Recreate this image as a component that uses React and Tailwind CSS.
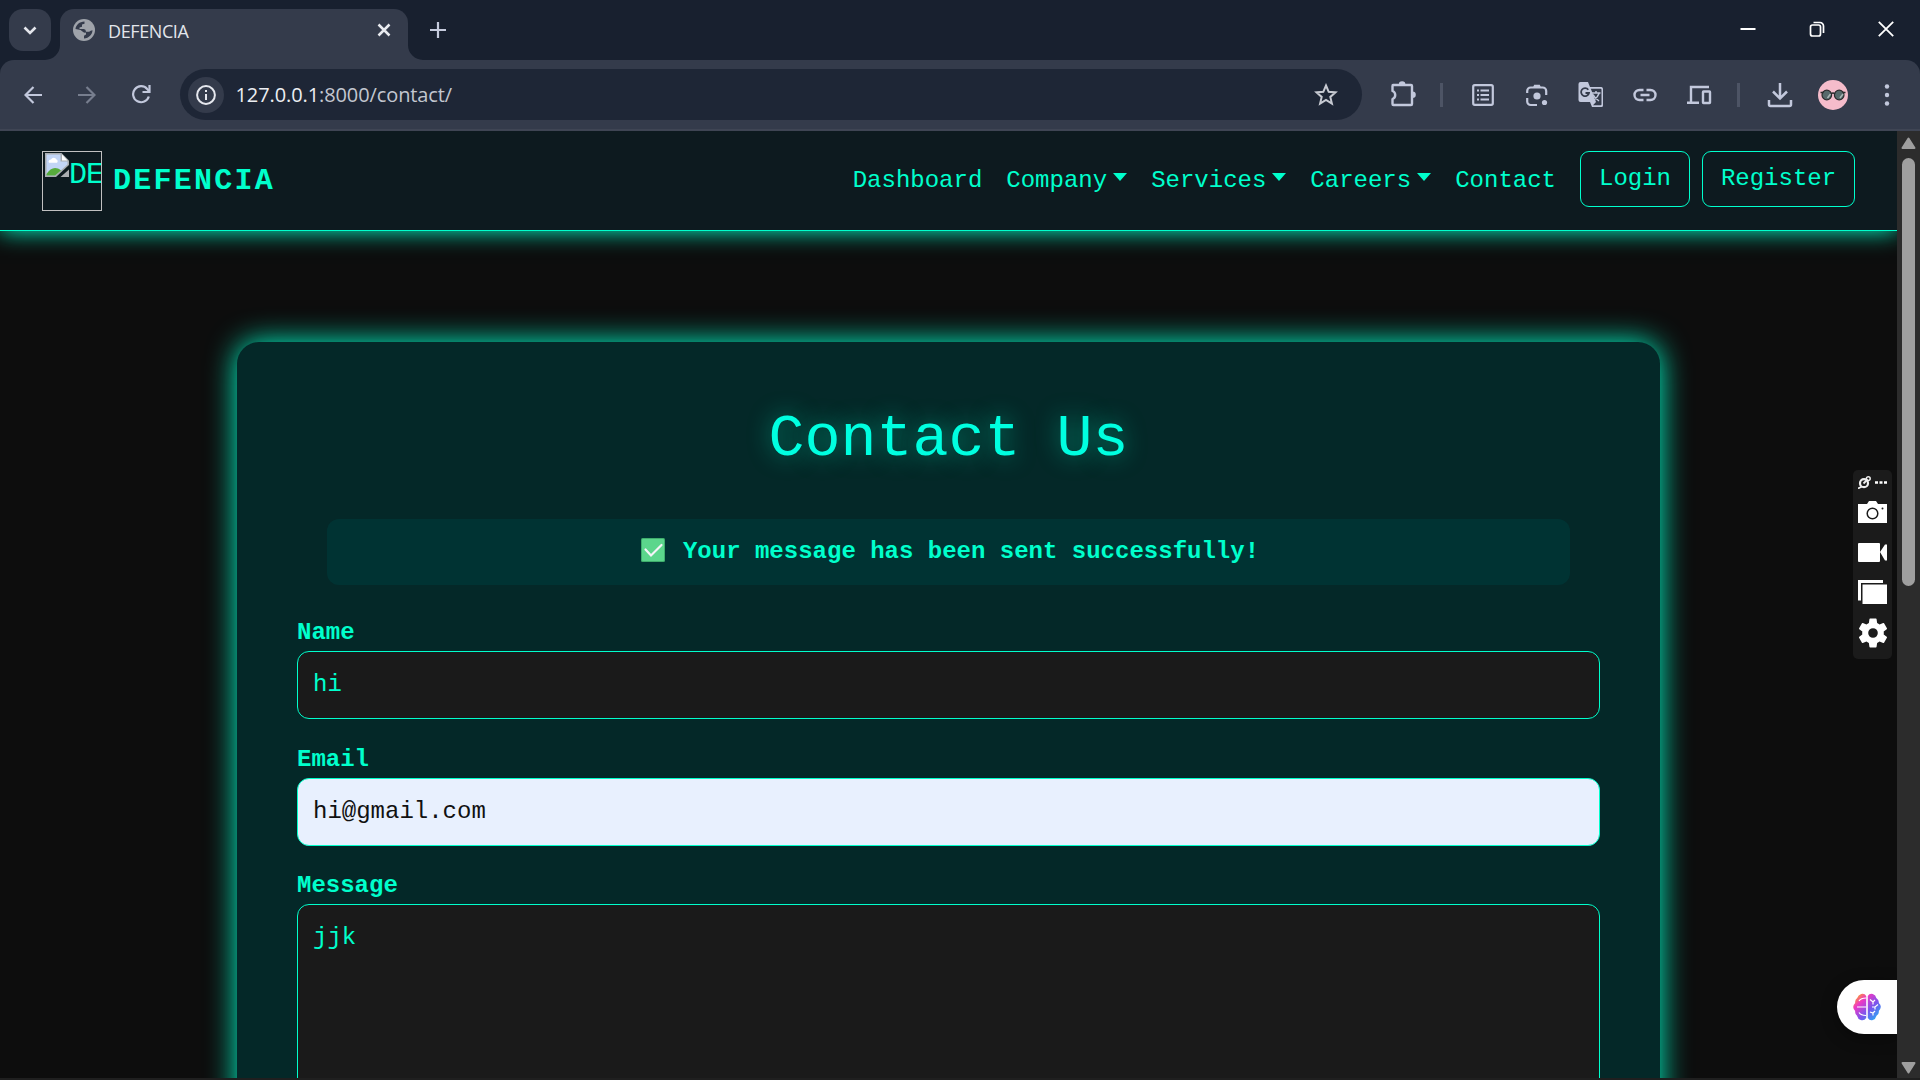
import React from "react";

const MONO = "font-['Courier_New','Liberation_Mono',monospace]";

function Icon({ className = "", children, box = "0 0 24 24", ...rest }) {
  return (
    <svg viewBox={box} className={`shrink-0 ${className}`} fill="none" {...rest}>
      {children}
    </svg>
  );
}

function TabStrip() {
  return (
    <div className="flex h-[60px] bg-[#18202f]">
      <div className="flex h-[60px] w-[60px] shrink-0 items-start rounded-br-[18px] pl-[9px] pt-[9px]">
        <div className="flex h-[42px] w-[42px] items-center justify-center rounded-[14px] bg-[#343b4b]">
          <Icon className="h-[42px] w-[42px]" box="0 0 42 42">
            <path d="M15.5 18.5l5.5 5.5 5.5-5.5" stroke="#e4e6ec" strokeWidth="2.6" />
          </Icon>
        </div>
      </div>
      <div className="relative mt-[9px] flex h-[51px] w-[348px] items-center rounded-t-[14px] bg-[#343b4b]">
        <svg viewBox="0 0 15 15" className="absolute -left-[15px] bottom-0 h-[15px] w-[15px]">
          <path d="M15 0v15H0A15 15 0 0 0 15 0z" fill="#343b4b" />
        </svg>
        <svg viewBox="0 0 15 15" className="absolute -right-[15px] bottom-0 h-[15px] w-[15px]">
          <path d="M0 0v15h15A15 15 0 0 1 0 0z" fill="#343b4b" />
        </svg>
        <Icon className="mb-[9px] ml-[13px] h-[22px] w-[22px]" box="0 0 22 22">
          <circle cx="11" cy="11" r="11" fill="#9fa3aa" />
          <path d="M2.500 10C2.800 6 6.500 2.600 11.500 2.500v2.200L9 5.500v2.300L6.500 8.500v1.500h4.300q2.200.3 2.200 2.800h3.200q1.300-1.500 3.300-1.500c0 4-3.500 8-8.500 8.200v-2.800l2-1.200v-2q-2.500.6-3.500-1L7.500 11z" fill="#343b4b" />
        </Icon>
        <span className="mb-[7px] ml-[13px] w-[250px] font-['Open_Sans','Noto_Sans',sans-serif] text-[18px] leading-none tracking-[-0.4px] text-[#e3e6ec]">
          DEFENCIA
        </span>
        <Icon className="mb-[9px] ml-[19px] h-[14px] w-[14px]" box="0 0 14 14">
          <path d="M1.5 1.5l11 11M12.500 1.500l-11 11" stroke="#e9ebf0" strokeWidth="2.5" />
        </Icon>
      </div>
      <Icon className="ml-[22px] mt-[22px] h-4 w-4" box="0 0 16 16">
        <path d="M8 0v16M0 8h16" stroke="#c5cbdd" strokeWidth="2.2" />
      </Icon>
      <div className="ml-auto mr-[26px] mt-[20px] flex h-[18px] w-[154px] items-center justify-between">
        <Icon className="h-4 w-4" box="0 0 16 16">
          <path d="M0.500 8h15" stroke="#fff" strokeWidth="2" />
        </Icon>
        <Icon className="h-4 w-4" box="0 0 16 16">
          <rect x="1.500" y="4" width="10" height="11" rx="2" stroke="#fff" strokeWidth="1.7" />
          <path d="M4.500 1.500h6.500a3.500 3.500 0 0 1 3.500 3.500v7" stroke="#fff" strokeWidth="1.700" />
        </Icon>
        <Icon className="h-4 w-4" box="0 0 16 16">
          <path d="M.8.8l14.400 14.400M15.200.8L.8 15.200" stroke="#fff" strokeWidth="1.800" />
        </Icon>
      </div>
    </div>
  );
}

function Toolbar() {
  return (
    <div className="bg-[#18202f]">
      <div className="flex h-[71px] items-center rounded-t-[14px] border-b-2 border-[#3f4554] bg-[#343b4b] pl-[24px] text-[#c2c8dc]">
        <Icon className="h-[18px] w-[18px]" box="0 0 18 18">
          <path d="M18 9H1.500M9.500 1L1.500 9l8 8" stroke="currentColor" strokeWidth="2.200" />
        </Icon>
        <Icon className="ml-[36px] h-[18px] w-[18px]" box="0 0 18 18">
          <path d="M0 9h16.500M8.500 1l8 8-8 8" stroke="#777e8e" strokeWidth="2.200" />
        </Icon>
        <Icon className="ml-[36px] h-[19px] w-[19px]" box="0 0 19 19">
          <path d="M16.800 11.500A8 8 0 1 1 15.200 4L17 6" stroke="currentColor" strokeWidth="2.200" />
          <path d="M17.500 0v7H10.500" stroke="currentColor" strokeWidth="2.200" />
        </Icon>
        <div className="ml-[29px] flex h-[51px] w-[1182px] items-center rounded-full bg-[#1e2636] pl-[8px] pr-[24px]">
          <div className="flex h-9 w-9 shrink-0 items-center justify-center rounded-full bg-[#343b4b]">
            <Icon className="h-[20px] w-[20px]" box="0 0 20 20">
              <circle cx="10" cy="10" r="8.900" stroke="#e6e8ee" strokeWidth="2" />
              <path d="M10 9v6M10 5v2" stroke="#e6e8ee" strokeWidth="2" />
            </Icon>
          </div>
          <span className="ml-[11.500px] whitespace-nowrap font-['Open_Sans','Noto_Sans',sans-serif] text-[20px] leading-none tracking-[-0.100px] text-[#c3c7d0]">
            <span className="text-[#eceef2]">127.0.0.1</span>:8000/contact/
          </span>
          <Icon className="ml-auto h-[24px] w-[24px]">
            <path
              d="M12 2.500l2.700 6.300 6.800.6-5.200 4.500 1.600 6.700-5.900-3.600-5.900 3.600 1.600-6.700L2.500 9.400l6.800-.6z"
              stroke="#c7cad2"
              strokeWidth="2"
            />
          </Icon>
        </div>
        <Icon className="mb-[2px] ml-[28px] h-[30px] w-[26px]" box="0 0 26 30">
          <path
            d="M3 6h18q1 0 1 1v18q0 1-1 1H3.500q-1 0-1-1v-5a4.300 4.300 0 0 0 0-8V7q0-1 .5-1z"
            stroke="currentColor"
            strokeWidth="2.400"
            strokeLinejoin="round"
          />
          <path d="M8.800 5.500a3.300 3.300 0 0 1 6.600 0zM22.500 12.500a3.300 3.300 0 0 1 0 6.600z" fill="currentColor" />
        </Icon>
        <div className="ml-[24px] h-[24px] w-[3px] bg-[#4d5465]" />
        <Icon className="ml-[29px] h-[22px] w-[22px]" box="0 0 22 22">
          <rect x="1.200" y="1.200" width="19.600" height="19.600" rx="1.500" stroke="currentColor" strokeWidth="2.200" />
          <path d="M8.500 6.500H17M8.500 11H17M8.500 15.500H17" stroke="currentColor" strokeWidth="2" />
          <path d="M5 6.500h2M5 11h2M5 15.500h2" stroke="currentColor" strokeWidth="2" />
        </Icon>
        <Icon className="ml-[31px] h-[24px] w-[24px]">
          <path
            d="M2.200 10V8a3.500 3.500 0 0 1 3.500-3.500h12A3.500 3.500 0 0 1 21.200 8v4M2.200 15v3.500A3.500 3.500 0 0 0 5.700 22H12"
            stroke="currentColor"
            strokeWidth="2.200"
          />
          <path d="M8 4.500L9.200 1.800h5.600L16 4.500z" fill="currentColor" />
          <circle cx="12" cy="13" r="3.600" fill="currentColor" />
          <circle cx="19.500" cy="19.500" r="2.600" fill="currentColor" />
        </Icon>
        <Icon className="ml-[29px] h-[26px] w-[26px]" box="0 0 26 26">
          <path d="M2.500 0H10l2 5h11.500A1.800 1.800 0 0 1 25 7v16.500a1.500 1.500 0 0 1-1.500 1.500H14l-2-5H2.500A2 2 0 0 1 .5 18V2a2 2 0 0 1 2-2z" fill="currentColor" />
          <path d="M12.800 6.700h9.700q1 0 1 1v14.600q0 1-1 1H15l3-3.300z" fill="#343b4b" />
          <path d="M10.300 7.700A4 4 0 1 0 11 11H7.500" stroke="#343b4b" strokeWidth="1.800" />
          <path d="M13.500 11h9M18 9v2M21 11.500c-1 3-3 5-5 6.500M15 12.500c1 2.500 3 4.500 6 6.500" stroke="currentColor" strokeWidth="1.500" />
        </Icon>
        <Icon className="ml-[28px] h-[24px] w-[26px]" box="0 0 26 24">
          <path d="M11.500 7H7.500a5 5 0 0 0 0 10h4M14.500 7h4a5 5 0 0 1 0 10h-4M8.500 12h9" stroke="currentColor" strokeWidth="2.400" />
        </Icon>
        <Icon className="ml-[28px] h-[24px] w-[26px]" box="0 0 26 24">
          <path d="M23 4H5v15M1 19.800h12" stroke="currentColor" strokeWidth="2.400" />
          <rect x="17" y="8.500" width="7" height="11.500" rx=".5" stroke="currentColor" strokeWidth="2.400" />
        </Icon>
        <div className="ml-[25px] h-[24px] w-[3px] bg-[#4d5465]" />
        <Icon className="ml-[27px] h-[26px] w-[26px]" box="0 0 26 26">
          <path d="M13 1v15M6 9.500l7 7 7-7M2 18v4.500Q2 24 3.500 24h19Q24 24 24 22.500V18" stroke="currentColor" strokeWidth="2.500" />
        </Icon>
        <Icon className="ml-[25px] h-[30px] w-[30px]" box="0 0 30 30">
          <circle cx="15" cy="15" r="15" fill="#f5bccb" />
          <circle cx="8.800" cy="15" r="4.800" fill="#56696b" stroke="#2b2b2d" strokeWidth="1.200" />
          <circle cx="21.200" cy="15" r="4.800" fill="#56696b" stroke="#2b2b2d" strokeWidth="1.200" />
          <path d="M13 14q2-2 4 0M2.500 12.500h3M24.500 12.500h3" stroke="#2b2b2d" strokeWidth="1.500" />
          <path d="M9.500 18l3-4M22 18l3-4" stroke="#a8b5b5" strokeWidth="1.500" />
        </Icon>
        <Icon className="ml-[36px] h-[24px] w-[6px]" box="0 0 6 24">
          <circle cx="3" cy="3.500" r="2.200" fill="currentColor" />
          <circle cx="3" cy="12" r="2.200" fill="currentColor" />
          <circle cx="3" cy="20.500" r="2.200" fill="currentColor" />
        </Icon>
      </div>
    </div>
  );
}

function Caret() {
  return <span className="mb-[9px] ml-[6px] h-0 w-0 border-x-[7px] border-t-[8px] border-x-transparent border-t-[#00ffcc]" />;
}

function NavLink({ label, caret }) {
  return (
    <a className="flex items-center">
      <span>{label}</span>
      {caret && <Caret />}
    </a>
  );
}

function SiteNav() {
  return (
    <nav className="relative flex h-[100px] shrink-0 items-start border-b border-[#00ffcc] bg-[#0d1a1f] pl-[42px] pr-[42px] text-[24px] leading-[36px] text-[#00ffcc] shadow-[0_0_22px_#00ffcc]">
      <div className="mt-5 flex h-[60px] w-[60px] shrink-0 items-start overflow-hidden border border-[#c0c0c0] pl-[2px] pt-[1px]">
        <svg viewBox="0 0 24 24" className="h-6 w-6 shrink-0">
          <path d="M0 0h16.500L24 7.500V12L11 24H0z" fill="#a9adb0" />
          <path d="M1.500 1.500h14v7h7V11.500L10 22.500H1.500z" fill="#c2d5f6" />
          <path d="M3.500 8.500a2.500 2.500 0 0 1 2.500-2 3 3 0 0 1 5.500 0 2 2 0 0 1 .500 3.300H4z" fill="#fff" />
          <path d="M1.500 21c4-6 9-8 14.500-3.500L10 22.500H1.500z" fill="#56ab3c" />
          <path d="M17 1.500V7.500H22.500z" fill="#fff" />
          <path d="M24 16.500V24h-8.500z" fill="#a9adb0" />
        </svg>
        <span className="mt-[4px] whitespace-nowrap text-[30px] tracking-[-1px]">DE</span>
      </div>
      <span className="ml-[11px] mt-[32px] text-[30px] font-bold tracking-[2.250px]">DEFENCIA</span>
      <div className="ml-auto mt-[32px] flex gap-[24px]">
        <NavLink label="Dashboard" />
        <NavLink label="Company" caret />
        <NavLink label="Services" caret />
        <NavLink label="Careers" caret />
        <NavLink label="Contact" />
      </div>
      <div className="ml-[24px] mt-5 flex gap-3">
        <a className="flex h-[56px] w-[110px] items-center justify-center rounded-[9px] border border-[#00ffcc]">Login</a>
        <a className="flex h-[56px] w-[153px] items-center justify-center rounded-[9px] border border-[#00ffcc]">Register</a>
      </div>
    </nav>
  );
}

function ContactCard() {
  return (
    <section className="mx-auto mt-[111px] h-[1100px] w-[1423px] shrink-0 rounded-[22px] bg-[#042828] px-[60px] pt-[60px] text-[24px] text-[#00ffcc] shadow-[0_0_30px_#00ffcc]">
      <h1 className="text-center text-[60px] leading-[74px] text-[#00ffe0] [text-shadow:0_0_22px_#00ffcc80]">Contact Us</h1>
      <div className="mx-[30px] mt-[43px] flex h-[66px] items-center justify-center rounded-[12px] bg-[#003333] pl-[3px] font-bold">
        <svg viewBox="0 0 24 24" className="mb-[5px] mr-[18px] h-6 w-6">
          <rect width="24" height="24" rx="1.500" fill="#3fae6d" />
          <rect x="1" y="1" width="22" height="22" rx="1" fill="#5bd68c" />
          <path d="M4.500 11.500l5.500 6L20.500 7" fill="none" stroke="#f4f4f8" strokeWidth="2.200" strokeLinecap="round" />
        </svg>
        <span>Your message has been sent successfully!</span>
      </div>
      <div className="mt-[30px] leading-[36px]">
        <Field label="Name">
          <div className="h-[68px] rounded-[12px] border border-[#00ffcc] bg-[#1a1a1a] px-[15px] pt-[15px]">hi</div>
        </Field>
        <Field label="Email">
          <div className="h-[68px] rounded-[12px] border border-[#00ffcc] bg-[#e8f0fe] px-[15px] pt-[15px] text-[#111]">hi@gmail.com</div>
        </Field>
        <Field label="Message">
          <div className="h-[300px] rounded-[12px] border border-[#00ffcc] bg-[#1a1a1a] px-[15px] pt-[15px]">jjk</div>
        </Field>
      </div>
    </section>
  );
}

function Field({ label, children }) {
  return (
    <div className="mb-[22.500px]">
      <div className="h-[36px] font-bold">{label}</div>
      {children}
    </div>
  );
}

function CaptureDock() {
  return (
    <div className="absolute right-[5px] top-[339px] flex h-[189px] w-[39px] flex-col items-center rounded-[5px] bg-[#1b1b1b]">
      <div className="mt-[6px] flex h-[13px] w-[29px] items-center justify-between">
        <Icon className="h-[13px] w-[13px]" box="0 0 13 13">
          <circle cx="6" cy="7.200" r="4" stroke="#eee" strokeWidth="2.200" />
          <path d="M5.500 7.500l4-4M0 12.500l4-2" stroke="#eee" strokeWidth="1.800" />
          <circle cx="10.300" cy="2.700" r="1.900" stroke="#eee" strokeWidth="1.500" />
        </Icon>
        <Icon className="h-[3px] w-[12px]" box="0 0 12 3">
          <path d="M0 1.500h3M4.500 1.500h3M9 1.500h3" stroke="#fff" strokeWidth="2.600" />
        </Icon>
      </div>
      <Icon className="mt-[12px] h-[22px] w-[29px]" box="0 0 29 22">
        <path d="M0 3h9l2-3h7l2 3h9v19H0z" fill="#fff" />
        <circle cx="14.500" cy="12.500" r="5.300" stroke="#1b1b1b" strokeWidth="1.500" />
        <circle cx="24.500" cy="7.500" r="1" fill="#1b1b1b" />
      </Icon>
      <Icon className="mt-[20px] h-[19px] w-[29px]" box="0 0 29 19">
        <path d="M1 0h20q1 0 1 1v17q0 1-1 1H1q-1 0-1-1V1q0-1 1-1zM22 9l5-7.500h2v16h-2z" fill="#fff" />
      </Icon>
      <Icon className="mt-[18px] h-[24px] w-[29px]" box="0 0 29 24">
        <path d="M0 0h25v3H3v17.500H0zM4.500 4.500H29V24H4.500z" fill="#fff" />
      </Icon>
      <Icon className="mt-[11px] h-[36px] w-[36px]">
        <path
          fill="#fff"
          d="M19.140 12.940c.04-.3.060-.61.060-.94 0-.32-.02-.64-.07-.94l2.030-1.580a.49.49 0 0 0 .12-.61l-1.920-3.320a.49.49 0 0 0-.59-.22l-2.390.96c-.5-.38-1.030-.7-1.620-.94l-.36-2.540a.48.48 0 0 0-.48-.41h-3.840a.47.47 0 0 0-.47.410l-.36 2.540c-.59.240-1.130.570-1.620.940l-2.390-.96a.47.47 0 0 0-.59.220L2.740 8.870a.48.48 0 0 0 .12.610l2.030 1.580c-.05.300-.09.630-.09.940s.02.640.07.940l-2.030 1.580a.49.49 0 0 0-.12.610l1.920 3.320c.12.220.370.290.590.220l2.390-.96c.5.380 1.030.700 1.620.940l.36 2.540c.050.240.240.410.480.410h3.840c.24 0 .44-.17.470-.41l.36-2.540c.59-.24 1.130-.56 1.620-.94l2.390.960c.22.080.470 0 .590-.22l1.920-3.320a.47.47 0 0 0-.12-.61zM12 15.200a3.200 3.200 0 1 1 0-6.400 3.200 3.200 0 0 1 0 6.400z"
        />
      </Icon>
    </div>
  );
}

function AssistantTab() {
  return (
    <div className="absolute bottom-[44px] right-0 flex h-[54px] w-[60px] items-center rounded-l-full bg-white pl-[16px] shadow-[0_4px_16px_rgba(0,0,0,0.4)]">
      <Icon className="h-[28px] w-[28px]" box="0 0 28 28">
        <defs>
          <linearGradient id="brain" x1="3" y1="2" x2="26" y2="26" gradientUnits="userSpaceOnUse">
            <stop offset="0" stopColor="#ffa51f" />
            <stop offset=".25" stopColor="#ee39c4" />
            <stop offset=".6" stopColor="#7a55ee" />
            <stop offset="1" stopColor="#1fb4f4" />
          </linearGradient>
        </defs>
        <path
          fill="url(#brain)"
          d="M13.200 3v22q-2 3-5.500 2-3-1-3.500-4-2.500-1.500-2-5-2-2-2-4t2-4q-.5-3 2-5 1-3 4-4 3.500-.8 5 2zM14.800 3q1.500-2.800 5-2 3 1 3.500 4 3 2 2.500 5 2.200 2 2 4t-2 4q.5 3.500-2.500 5-.5 3-3.500 4-3 1-5-2z"
        />
        <path
          d="M4 14h9M6 8q2-3 7-3M6 19.500q2 3 7 3M19 14h3l3-2.500M22 14v2.500M17 6.500l3 2.500 2-2M20 9v2.500M17 19l3 1 2-2M20 20v2.500"
          stroke="#fff"
          strokeWidth="1.200"
        />
      </Icon>
    </div>
  );
}

function Scrollbar() {
  return (
    <div className="flex w-[23px] shrink-0 flex-col items-center bg-[#2c2c2c] pb-[4px] pt-[6px]">
      <Icon className="h-[12px] w-[15px]" box="0 0 15 12">
        <path d="M7.500 1.500L13.500 11h-12z" fill="#9f9f9f" stroke="#9f9f9f" strokeWidth="2" strokeLinejoin="round" />
      </Icon>
      <div className="mt-[9px] h-[428px] w-[13px] rounded-full bg-[#9f9f9f]" />
      <Icon className="mt-auto h-[12px] w-[15px]" box="0 0 15 12">
        <path d="M7.500 10.500L1.500 1h12z" fill="#9f9f9f" stroke="#9f9f9f" strokeWidth="2" strokeLinejoin="round" />
      </Icon>
    </div>
  );
}

export default function App() {
  return (
    <div className="flex h-[1080px] w-[1920px] flex-col overflow-hidden bg-[#1f1f1f]">
      <TabStrip />
      <Toolbar />
      <div className="flex h-[947px] shrink-0">
        <main className={`relative flex w-[1897px] flex-col overflow-hidden bg-[#0d0d0d] ${MONO}`}>
          <SiteNav />
          <ContactCard />
          <CaptureDock />
          <AssistantTab />
        </main>
        <Scrollbar />
      </div>
    </div>
  );
}
